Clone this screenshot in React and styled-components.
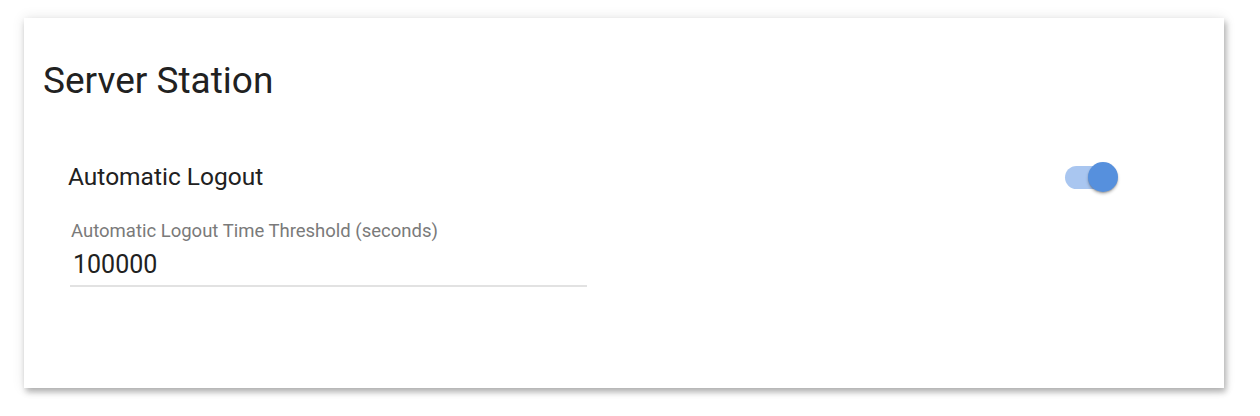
import styled, { createGlobalStyle } from "styled-components";

const GlobalStyle = createGlobalStyle`
  html, body {
    margin: 0;
    padding: 0;
    background: #ffffff;
    font-family: Roboto, "Liberation Sans", sans-serif;
  }
`;

const SPage = styled.div`
  padding: 18px 36px 28px 24px;
`;

const SCard = styled.div`
  width: 1200px;
  height: 370px;
  box-sizing: border-box;
  background: #ffffff;
  padding: 41px 106px 0 19px;
  box-shadow: 2px 4px 6px rgba(0, 0, 0, 0.28), 0 0 12px rgba(0, 0, 0, 0.1);
`;

const STitle = styled.h1`
  margin: 0;
  font-size: 37px;
  line-height: 44px;
  font-weight: 400;
  color: #212121;
`;

const SSection = styled.div`
  margin-top: 56px;
  padding-left: 25px;
`;

const SRow = styled.div`
  display: flex;
  align-items: center;
  justify-content: space-between;
  height: 36px;
`;

const SRowLabel = styled.span`
  font-size: 24.5px;
  line-height: 32px;
  color: #212121;
`;

const SSwitch = styled.div`
  position: relative;
  width: 53px;
  height: 30px;
`;

const STrack = styled.div`
  position: absolute;
  left: 0;
  top: 4px;
  width: 48px;
  height: 23px;
  border-radius: 12px;
  background: ${(p) => (p.$on ? "#a9c6f0" : "#cfcfcf")};
`;

const SThumb = styled.div`
  position: absolute;
  top: 0;
  ${(p) => (p.$on ? "right: 0;" : "left: 0;")}
  width: 30px;
  height: 30px;
  border-radius: 50%;
  background: ${(p) => (p.$on ? "#5690dd" : "#fafafa")};
  box-shadow: 0 2px 3px rgba(0, 0, 0, 0.25), 0 1px 1px rgba(0, 0, 0, 0.15);
`;

const SField = styled.div`
  width: 517px;
  margin-top: 25px;
  margin-left: 2px;
  border-bottom: 2px solid #e2e2e2;
  padding-bottom: 5px;
`;

const SFieldLabel = styled.div`
  font-size: 18.5px;
  line-height: 22px;
  color: #7a7a7a;
  padding-left: 1px;
`;

const SFieldValue = styled.div`
  margin-top: 8px;
  font-size: 25px;
  line-height: 30px;
  color: #212121;
  padding-left: 3px;
`;

const Switch = ({ on }) => (
  <SSwitch>
    <STrack $on={on} />
    <SThumb $on={on} />
  </SSwitch>
);

const App = () => {
  return (
    <SPage>
      <GlobalStyle />
      <SCard>
        <STitle>Server Station</STitle>
        <SSection>
          <SRow>
            <SRowLabel>Automatic Logout</SRowLabel>
            <Switch on />
          </SRow>
          <SField>
            <SFieldLabel>Automatic Logout Time Threshold (seconds)</SFieldLabel>
            <SFieldValue>100000</SFieldValue>
          </SField>
        </SSection>
      </SCard>
    </SPage>
  );
};

export default App;
